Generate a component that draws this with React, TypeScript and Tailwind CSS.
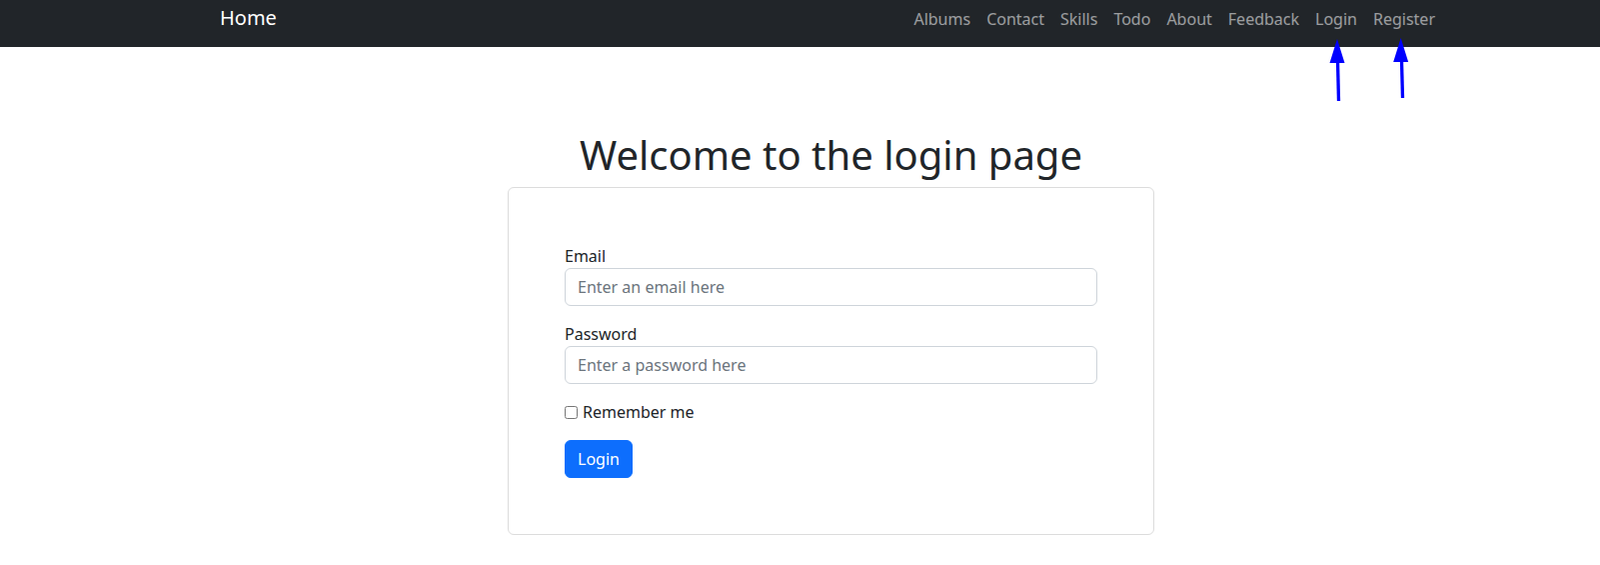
export default function App() {
  const links = ["Albums", "Contact", "Skills", "Todo", "About", "Feedback", "Login", "Register"];

  return (
    <div className="relative min-h-screen bg-white text-[#212529] font-['Noto_Sans',sans-serif]">
      <nav className="h-[47px] bg-[#212529]">
        <div className="flex items-start justify-between pl-[220px] pr-[165px]">
          <a className="pt-[3px] text-[20px] leading-[30px] text-white">Home</a>
          <ul className="-mr-2 flex pt-[7px]">
            {links.map((link) => (
              <li key={link}>
                <a className="block px-2 text-[16px] leading-6 text-white/55">{link}</a>
              </li>
            ))}
          </ul>
        </div>
      </nav>

      <main className="ml-[508px] w-[647px]">
        <h1 className="mt-[84px] mb-2 text-center text-[40px] leading-[48px] font-normal">
          Welcome to the login page
        </h1>

        <div className="rounded-md border border-[#dcdcdc] p-14">
          <form>
            <div className="mb-4">
              <label className="block text-[16px] leading-6">Email</label>
              <input
                type="email"
                placeholder="Enter an email here"
                className="block h-[38px] w-full rounded-md border border-[#ced4da] px-3 text-[16px] leading-6 placeholder:text-[#6c757d]"
              />
            </div>
            <div className="mb-4">
              <label className="block text-[16px] leading-6">Password</label>
              <input
                type="password"
                placeholder="Enter a password here"
                className="block h-[38px] w-full rounded-md border border-[#ced4da] px-3 text-[16px] leading-6 placeholder:text-[#6c757d]"
              />
            </div>
            <div className="mb-4 flex items-center text-[16px] leading-6">
              <input type="checkbox" className="mr-[5px] h-[13px] w-[13px]" />
              <label>Remember me</label>
            </div>
            <button
              type="button"
              className="h-[38px] rounded-md border border-[#0d6efd] bg-[#0d6efd] px-3 text-[16px] leading-6 text-white"
            >
              Login
            </button>
          </form>
        </div>
      </main>

      {/* annotation arrows */}
      <svg className="pointer-events-none absolute top-0 left-0" width="1601" height="110">
        <line x1="1338.5" y1="60" x2="1339.5" y2="101" stroke="#0000ff" strokeWidth="3.3" />
        <polygon points="1338,39 1330.5,63 1345.5,63" fill="#0000ff" />
        <line x1="1402.5" y1="60" x2="1403.5" y2="98" stroke="#0000ff" strokeWidth="3.3" />
        <polygon points="1401.7,38 1394.2,62 1409.2,62" fill="#0000ff" />
      </svg>
    </div>
  );
}
